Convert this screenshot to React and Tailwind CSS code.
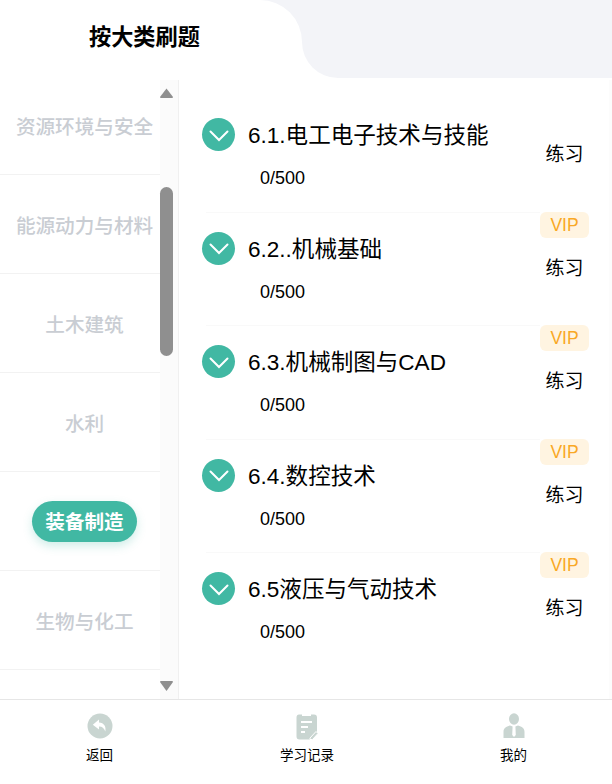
const categories = [
  { name: '资源环境与安全', first: true },
  { name: '能源动力与材料' },
  { name: '土木建筑' },
  { name: '水利' },
  { name: '装备制造', active: true },
  { name: '生物与化工' },
  { name: '', tail: true },
];

const lessons = [
  { title: '6.1.电工电子技术与技能', vip: false },
  { title: '6.2..机械基础', vip: true },
  { title: '6.3.机械制图与CAD', vip: true },
  { title: '6.4.数控技术', vip: true },
  { title: '6.5液压与气动技术', vip: true },
];

function ChevronBadge() {
  return (
    <div className="flex h-[33px] w-[33px] shrink-0 items-center justify-center rounded-full bg-[#41b8a3]">
      <svg className="mt-[2px]" width="22" height="14" viewBox="0 0 22 14" fill="none">
        <path d="M2.5 2.5 L11 11 L19.5 2.5" stroke="#fff" strokeWidth="2" strokeLinecap="round" strokeLinejoin="miter" />
      </svg>
    </div>
  );
}

function BackIcon() {
  return (
    <svg width="26" height="26" viewBox="0 0 26 26">
      <circle cx="13" cy="13" r="12.5" fill="#c9d5d1" />
      <path d="M12 6.5 L5.8 11.8 L12 16.5 V13.4 C15 13.3 17 14.6 18.3 18.5 C19.4 13.5 17 9.6 12 9.4 Z" fill="#fff" />
    </svg>
  );
}

function NotesIcon() {
  return (
    <svg width="22" height="27" viewBox="0 0 22 27">
      <path d="M3 1.5 H6 V3 H15 V1.5 H18 C20 1.5 21 2.5 21 4.5 V19 L14.5 26.5 H3.5 C1.5 26.5 0.5 25.5 0.5 23.5 V4.5 C0.5 2.5 1.5 1.5 3 1.5 Z" fill="#c9d5d1" />
      <rect x="5" y="8" width="11" height="2" fill="#fff" />
      <rect x="5" y="13" width="7" height="2" fill="#fff" />
      <rect x="5" y="18" width="4" height="2" fill="#fff" />
      <path d="M14 25 L20 18.5 L22 20.5 L16.5 26.5 H14 Z" fill="#c9d5d1" stroke="#fff" strokeWidth="1" />
    </svg>
  );
}

function PersonIcon() {
  return (
    <svg width="22" height="26" viewBox="0 0 22 26">
      <ellipse cx="11" cy="6" rx="5" ry="5.8" fill="#c9d5d1" />
      <path d="M7 12.5 L9.6 13.5 L9.2 22 L11 24 L12.8 22 L12.4 13.5 L15 12.5 C19 13.5 21.5 15 21.5 19 V25 H0.5 V19 C0.5 15 3 13.5 7 12.5 Z" fill="#c9d5d1" />
    </svg>
  );
}

function NavItem({ icon, label, className }) {
  return (
    <div className={`flex flex-col items-center ${className}`}>
      <div className="flex h-[30px] items-center justify-center">{icon}</div>
      <span className="mt-[5px] text-[13.5px] leading-[20px] text-black">{label}</span>
    </div>
  );
}

export default function App() {
  return (
    <div className="flex h-[784px] w-[612px] flex-col overflow-hidden bg-white font-['Liberation_Sans','Noto_Sans_CJK_SC',sans-serif]">
      {/* header tabs */}
      <div className="flex h-[80px] shrink-0">
        <div className="w-[302px] bg-[#f3f4f8]">
          <div className="flex h-full items-start rounded-tr-[42px] bg-white pt-[24px] pl-[89px]">
            <h1 className="text-[22.2px] leading-[28px] font-bold text-black">按大类刷题</h1>
          </div>
        </div>
        <div className="flex-1 bg-white">
          <div className="h-[78px] rounded-bl-[36px] bg-[#f3f4f8]" />
        </div>
      </div>

      <div className="flex min-h-0 flex-1">
        {/* category list */}
        <div className="flex w-[179px] shrink-0 border-r border-[#f0f0f0]">
          <div className="w-[160px] shrink-0">
            {categories.map((cat) => (
              <div
                key={cat.name || 'tail'}
                className={`flex items-center justify-center pl-[9px] ${cat.first ? 'h-[95px] pt-[1px]' : 'h-[99px] pt-[5px]'} ${cat.tail ? '' : 'border-b border-[#f2f2f2]'}`}
              >
                {cat.active ? (
                  <span className="flex h-[41px] w-[105px] -translate-y-[2px] items-center justify-center rounded-full bg-[#41b8a3] pt-[3px] text-[19.6px] font-bold text-white shadow-[0_4px_10px_rgba(65,184,163,0.25)]">
                    {cat.name}
                  </span>
                ) : (
                  <span className="text-[19.6px] font-medium text-[#c9cdd3]">{cat.name}</span>
                )}
              </div>
            ))}
          </div>
          {/* scrollbar */}
          <div className="flex w-[18px] flex-col bg-[#fbfbfb] pr-[5px]">
            <svg className="mt-[8px] shrink-0" width="13" height="10" viewBox="0 0 13 10">
              <path d="M6.5 0.5 L13 9 Q13 10 12 10 H1 Q0 10 0 9 Z" fill="#8f8f8f" />
            </svg>
            <div className="mt-[89px] h-[169px] w-[13px] shrink-0 rounded-full bg-[#8f8f8f]" />
            <svg className="mt-[325px] shrink-0" width="13" height="10" viewBox="0 0 13 10">
              <path d="M6.5 10 L13 1 Q13 0 12 0 H1 Q0 0 0 1 Z" fill="#8f8f8f" />
            </svg>
          </div>
        </div>

        {/* lessons */}
        <div className="flex-1 border-r-[3px] border-[#fcfcfc] pt-[18px] pr-[20px] pl-[23px]">
          {lessons.map((lesson, i) => (
            <div key={lesson.title} className="flex h-[113.5px] items-start">
              <div className="relative h-full flex-1 pt-[20px]">
                {i > 0 && <div className="absolute top-0 right-0 left-[4px] h-px bg-[#f9f9f9]" />}
                <div className="flex items-center gap-[13px]">
                  <ChevronBadge />
                  <span className="translate-y-[1px] text-[22.55px] leading-[33px] text-black">{lesson.title}</span>
                </div>
                <div className="mt-[16px] pl-[58px] text-[18px] leading-[22px] text-black">0/500</div>
              </div>
              <div className="flex w-[49px] shrink-0 flex-col items-center">
                {lesson.vip ? (
                  <span className="flex h-[26px] w-[49px] items-center justify-center rounded-[6px] bg-[#fff4e1] pt-[1px] text-[17.5px] text-[#f9a825]">
                    VIP
                  </span>
                ) : (
                  <span className="h-[26px]" />
                )}
                <span className="mt-[19px] text-[19px] leading-[24px] text-black">练习</span>
              </div>
            </div>
          ))}
        </div>
      </div>

      {/* bottom nav */}
      <div className="relative flex h-[85px] shrink-0 border-t border-[#e6e6e6] bg-white pt-[11px]">
        <NavItem icon={<BackIcon />} label="返回" className="ml-[79px] w-[41px]" />
        <NavItem icon={<NotesIcon />} label="学习记录" className="ml-[160px] w-[54px]" />
        <NavItem icon={<PersonIcon />} label="我的" className="ml-[166px] w-[27px]" />
      </div>
    </div>
  );
}
